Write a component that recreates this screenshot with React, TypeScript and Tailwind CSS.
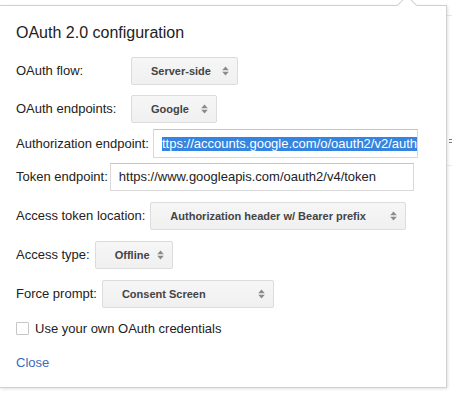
import React from "react";

function Arrows() {
  return (
    <svg width="7" height="10" viewBox="0 0 7 10" className="shrink-0">
      <path d="M3.5 0.5 L6.8 4.2 L0.2 4.2 Z" fill="#8a8a8a" />
      <path d="M3.5 9.5 L6.8 5.8 L0.2 5.8 Z" fill="#8a8a8a" />
    </svg>
  );
}

function Select({ label, w }: { label: string; w: string }) {
  return (
    <div
      className={`${w} h-[28px] shrink-0 flex items-center justify-between pl-[19px] pr-[8px] rounded-[2px] border border-[#dcdcdc] bg-gradient-to-b from-[#f6f6f6] to-[#f0f0f0] text-[11px] font-bold text-[#444]`}
    >
      <span className="whitespace-nowrap">{label}</span>
      <Arrows />
    </div>
  );
}

function Label({ children, w }: { children: React.ReactNode; w?: string }) {
  return <span className={`${w ?? ""} shrink-0 whitespace-nowrap text-[13px] text-[#222]`}>{children}</span>;
}

export default function App() {
  return (
    <div
      className="relative w-[452px] h-[396px] overflow-hidden bg-white pt-[5px]"
      style={{ fontFamily: '"Liberation Sans", Arial, sans-serif' }}
    >
      {/* faint page content behind the popover */}
      <div className="absolute left-[447px] top-[15px] w-[10px] h-px bg-[#e6e6e6]" />
      <div className="absolute left-[447px] top-[165px] w-[10px] h-px bg-[#ececec]" />
      <div className="absolute left-[449px] top-[139px] w-[3px] h-px bg-[#777]" />
      <div className="absolute left-[449px] top-[142px] w-[3px] h-px bg-[#777]" />

      <div className="relative w-[447px] h-[383px] bg-white border-t border-r border-b border-[#d0d0d0] shadow-[1px_1px_3px_rgba(0,0,0,0.12)] pl-[16px] pt-[17px]">
        {/* notch */}
        <div className="absolute left-[400px] top-[-8px] w-[14px] h-[14px] rotate-45 bg-white border-l border-t border-[#d0d0d0]" />

        <div className="relative h-[20px] leading-[20px] text-[16px] text-[#222]">OAuth 2.0 configuration</div>

        <div className="flex items-center mt-[14px]">
          <Label w="w-[115px]">OAuth flow:</Label>
          <Select label="Server-side" w="w-[107px]" />
        </div>

        <div className="flex items-center mt-[10px]">
          <Label w="w-[115px]">OAuth endpoints:</Label>
          <Select label="Google" w="w-[86px]" />
        </div>

        <div className="flex items-center gap-[4px] mt-[6px]">
          <Label>Authorization endpoint:</Label>
          <div className="w-[265px] h-[29px] shrink-0 flex items-center pl-[8px] overflow-hidden border border-[#d9d9d9] border-t-[#c4c4c4] bg-white text-[13px] whitespace-nowrap">
            <span className="bg-[#3484e0] text-white leading-[14px]">ttps://accounts.google.com/o/oauth2/v2/auth</span>
          </div>
        </div>

        <div className="flex items-center gap-[2px] mt-[5px]">
          <Label>Token endpoint:</Label>
          <div className="w-[304px] h-[28px] shrink-0 flex items-center pl-[8px] overflow-hidden border border-[#d9d9d9] border-t-[#c4c4c4] bg-white text-[13px] text-[#222] whitespace-nowrap">
            https://www.googleapis.com/oauth2/v4/token
          </div>
        </div>

        <div className="flex items-center gap-[5px] mt-[11px]">
          <Label>Access token location:</Label>
          <Select label="Authorization header w/ Bearer prefix" w="w-[256px]" />
        </div>

        <div className="flex items-center gap-[5px] mt-[11px]">
          <Label>Access type:</Label>
          <Select label="Offline" w="w-[78px]" />
        </div>

        <div className="flex items-center gap-[5px] mt-[11px]">
          <Label>Force prompt:</Label>
          <Select label="Consent Screen" w="w-[172px]" />
        </div>

        <div className="flex items-center gap-[6px] mt-[14px] h-[13px]">
          <div className="w-[13px] h-[13px] shrink-0 border border-[#c6c6c6] rounded-[1px] bg-white" />
          <Label>Use your own OAuth credentials</Label>
        </div>

        <div className="mt-[20px] text-[13px] leading-[16px] text-[#3a6cc0]">Close</div>
      </div>
    </div>
  );
}
